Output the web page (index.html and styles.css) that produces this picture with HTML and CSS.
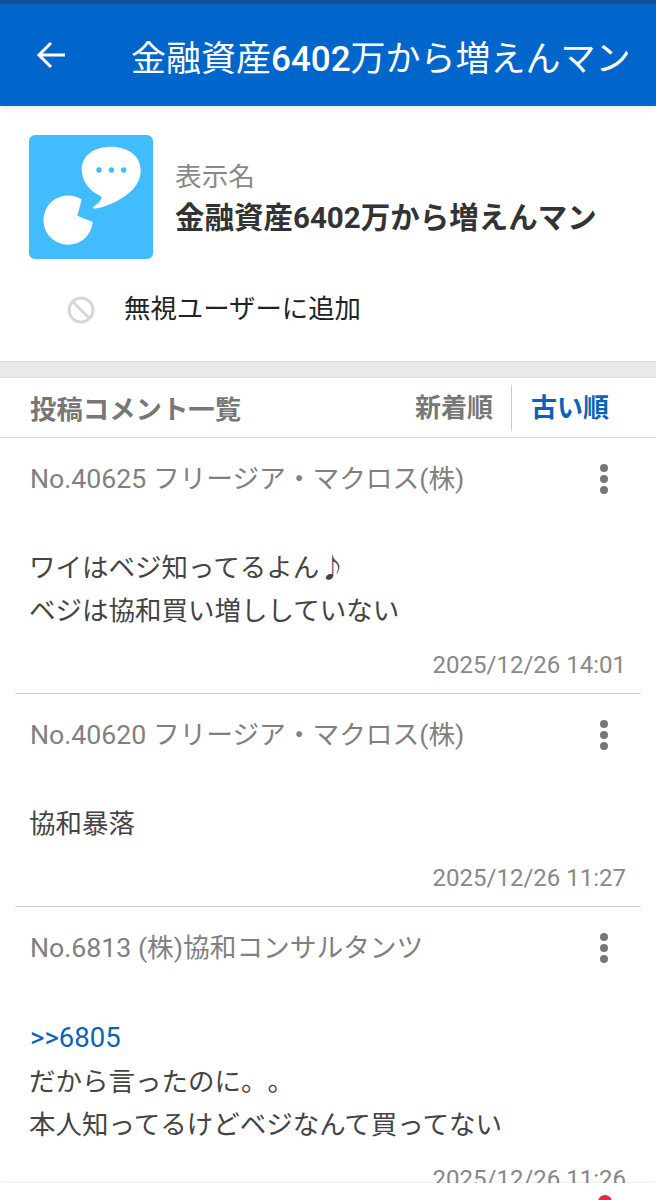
FILE: index.html
```html
<!DOCTYPE html>
<html lang="ja">

<head>
    <meta charset="UTF-8">
    <meta name="viewport" content="width=device-width, initial-scale=1.0">
    <title>金融資産6402万から増えんマン</title>
    <link rel="stylesheet" href="styles.css">
</head>

<body>
    <div class="page">
        <header class="app-bar">
            <svg class="back" viewBox="0 0 30 30" width="30" height="30" fill="none" stroke="#fff" stroke-width="3">
                <path d="M29 15H3M15 3L3 15l12 12" />
            </svg>
            <h1>金融資産<span class="num">6402</span>万から増えんマン</h1>
        </header>

        <section class="profile">
            <div class="profile-top">
                <svg class="avatar" viewBox="0 0 124 124" width="124" height="124">
                    <rect width="124" height="124" rx="6" fill="#40bcff" />
                    <path fill="#fff" d="M52.700 34C52.700 20 66 11.700 82 11.700C99 11.700 111.700 21 111.700 35C111.700 51 99 60 88 66C80 70 72 73 66 73.500C63.500 73.700 63.500 72 65.500 71C69 69 72 66 72.700 61.700C60 56 52.700 46 52.700 34z" />
                    <path fill="#fff" d="M52.700 64.500L48.300 80.700L63.700 87A24.700 24.700 0 1 1 52.700 64.500z" />
                    <circle cx="70" cy="35" r="2.700" fill="#40bcff" />
                    <circle cx="82.500" cy="35" r="2.700" fill="#40bcff" />
                    <circle cx="94.700" cy="35" r="2.700" fill="#40bcff" />
                </svg>
                <div class="profile-name">
                    <div class="label">表示名</div>
                    <div class="name">金融資産6402万から増えんマン</div>
                </div>
            </div>
            <div class="ignore">
                <svg viewBox="0 0 28 28" width="28" height="28" fill="none" stroke="#d6d6d6" stroke-width="3">
                    <circle cx="14" cy="14" r="12" />
                    <path d="M5.500 5.500l17 17" />
                </svg>
                <span>無視ユーザーに追加</span>
            </div>
        </section>

        <div class="spacer"></div>

        <div class="list-head">
            <div class="list-title">投稿コメント一覧</div>
            <div class="sort">新着順</div>
            <div class="sort active">古い順</div>
        </div>

        <article class="comment">
            <div class="comment-head">
                <span>No.40625 フリージア・マクロス(株)</span>
                <div class="more"><i></i><i></i><i></i></div>
            </div>
            <p>ワイはベジ知ってるよん♪<br>ベジは協和買い増ししていない</p>
            <div class="date">2025/12/26 14:01</div>
        </article>

        <article class="comment">
            <div class="comment-head">
                <span>No.40620 フリージア・マクロス(株)</span>
                <div class="more"><i></i><i></i><i></i></div>
            </div>
            <p>協和暴落</p>
            <div class="date">2025/12/26 11:27</div>
        </article>

        <article class="comment">
            <div class="comment-head">
                <span>No.6813 (株)協和コンサルタンツ</span>
                <div class="more"><i></i><i></i><i></i></div>
            </div>
            <p><a href="#">&gt;&gt;6805</a><br>だから言ったのに。。<br>本人知ってるけどベジなんて買ってない</p>
            <div class="date">2025/12/26 11:26</div>
        </article>

        <div class="bottom-bar"><span class="dot"></span></div>
    </div>
</body>

</html>
```

FILE: styles.css
```css
* {
    box-sizing: border-box;
}

body {
    margin: 0;
    font-family: Roboto, "Noto Sans CJK JP", sans-serif;
    background-color: #fff;
    color: #333;
    text-spacing-trim: space-all;
}

.page {
    position: relative;
    height: 1200px;
    overflow: hidden;
}

.app-bar {
    display: flex;
    align-items: center;
    height: 106px;
    padding: 0 0 0 36px;
    background-color: #0066cc;
    border-top: 4px solid #174f9c;
    box-shadow: 0 2px 6px rgba(0, 0, 0, 0.1);
    color: #fff;
}

.app-bar h1 {
    margin: 0 0 0 65px;
    font-size: 35px;
    font-weight: 400;
    white-space: nowrap;
}

.num {
    font-weight: 500;
}

.back {
    flex: none;
}

.profile {
    height: 255px;
    padding: 29px 29px 0;
}

.profile-top {
    display: flex;
    align-items: center;
    gap: 22px;
}

.profile-name {
    padding-top: 4px;
}

.label {
    font-size: 26.700px;
    line-height: 38px;
    color: #888;
}

.name {
    font-size: 29.500px;
    line-height: 44px;
    font-weight: 700;
    white-space: nowrap;
}

.ignore {
    display: flex;
    align-items: center;
    gap: 29px;
    margin: 28px 0 0 38px;
    font-size: 26.400px;
    color: #222;
}

.ignore svg {
    margin-top: 7px;
}

.spacer {
    height: 17px;
    background-color: #e9e9e9;
    border-top: 1px solid #d8d8d8;
    border-bottom: 1px solid #e0e0e0;
}

.list-head {
    display: flex;
    align-items: center;
    height: 60px;
    padding: 6px 30px 6px;
    border-bottom: 1px solid #ddd;
    font-size: 26px;
    font-weight: 700;
    color: #777;
}

.list-title {
    flex: 1;
    font-size: 26.400px;
}

.sort {
    height: 46px;
    line-height: 46px;
    padding-right: 18px;
}

.sort.active {
    padding: 0 17px 0 19px;
    border-left: 1px solid #ccc;
    color: #0b63b8;
}

.comment {
    margin: 0 15px;
    padding: 21px 15px 0;
    border-bottom: 1px solid #ccc;
}

.comment-head {
    display: flex;
    justify-content: space-between;
    align-items: center;
    font-size: 26.700px;
    line-height: 40px;
    color: #808080;
}

.more {
    display: flex;
    flex-direction: column;
    gap: 3px;
    margin: -1px 18px 0 0;
}

.more i {
    width: 8px;
    height: 8px;
    border-radius: 50%;
    background-color: #777;
}

.comment p {
    margin: 47px 0 0 -1px;
    font-size: 26.500px;
    line-height: 43px;
    color: #444;
}

.comment a {
    display: inline-block;
    margin-left: 1px;
    font-size: 27.500px;
    line-height: 45px;
    color: #0b63b8;
    text-decoration: none;
}

.date {
    margin-top: 17px;
    padding-bottom: 12px;
    text-align: right;
    font-size: 24px;
    line-height: 32px;
    color: #888;
}

.bottom-bar {
    position: absolute;
    left: 0;
    right: 0;
    bottom: 0;
    height: 17px;
    background-color: #fff;
    box-shadow: 0 -1px 3px rgba(0, 0, 0, 0.08);
}

.dot {
    position: absolute;
    left: 598px;
    top: 12px;
    width: 14px;
    height: 14px;
    border-radius: 50%;
    background-color: #e8264a;
}
```
